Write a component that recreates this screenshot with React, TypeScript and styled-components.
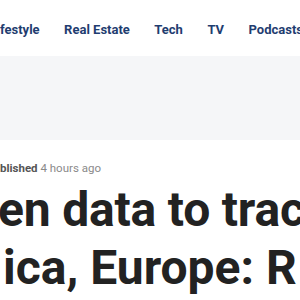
import { createGlobalStyle, styled } from "styled-components";

const NAV_ITEMS = ["festyle", "Real Estate", "Tech", "TV", "Podcasts"];

export default function App() {
  return (
    <>
      <GlobalStyle />
      <Page>
        <Nav>
          {NAV_ITEMS.map((item) => (
            <NavLink key={item}>{item}</NavLink>
          ))}
        </Nav>
        <AdBand />
        <Article>
          <Meta>
            <strong>blished</strong> 4 hours ago
          </Meta>
          <Headline>
            <HeadLine $indent={-2} $spacing={-0.2}>en data to track</HeadLine>
            <HeadLine $indent={3}>ica, Europe: R</HeadLine>
          </Headline>
        </Article>
      </Page>
    </>
  );
}

const GlobalStyle = createGlobalStyle`
  html, body {
    margin: 0;
    padding: 0;
    background: #ffffff;
    overflow: hidden;
  }
`;

const Page = styled.div`
  width: 300px;
  height: 300px;
  overflow: hidden;
  display: flex;
  flex-direction: column;
  font-family: Roboto, "Liberation Sans", sans-serif;
`;

const Nav = styled.nav`
  height: 56px;
  flex-shrink: 0;
  display: flex;
  align-items: center;
  gap: 24.5px;
  padding-top: 3px;
  white-space: nowrap;
  box-sizing: border-box;
`;

const NavLink = styled.a`
  font-size: 13px;
  font-weight: 700;
  color: #1f3d70;
  text-decoration: none;
`;

const AdBand = styled.div`
  height: 84px;
  background: #f5f6f8;
  flex-shrink: 0;
`;

const Article = styled.div`
  display: flex;
  flex-direction: column;
  padding-top: 21px;
`;

const Meta = styled.div`
  font-size: 11.5px;
  color: #8a8a8a;
  white-space: nowrap;
  line-height: 14px;

  strong {
    color: #555555;
    font-weight: 700;
  }
`;

const Headline = styled.h1`
  margin: 6px 0 0;
  font-size: 48px;
  font-weight: 700;
  line-height: 58px;
  color: #222222;
  white-space: nowrap;
`;

const HeadLine = styled.span<{ $indent?: number; $spacing?: number }>`
  display: block;
  margin-left: ${(p) => p.$indent ?? 1}px;
  letter-spacing: ${(p) => p.$spacing ?? 0}px;
`;
